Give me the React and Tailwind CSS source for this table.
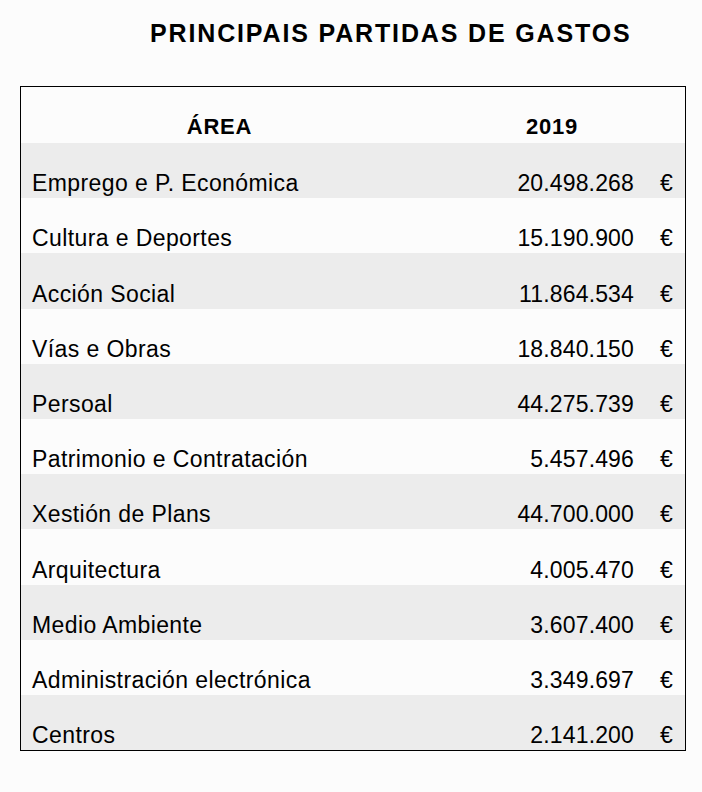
import React from "react";

const rows = [
  ["Emprego e P. Económica", "20.498.268"],
  ["Cultura e Deportes", "15.190.900"],
  ["Acción Social", "11.864.534"],
  ["Vías e Obras", "18.840.150"],
  ["Persoal", "44.275.739"],
  ["Patrimonio e Contratación", "5.457.496"],
  ["Xestión de Plans", "44.700.000"],
  ["Arquitectura", "4.005.470"],
  ["Medio Ambiente", "3.607.400"],
  ["Administración electrónica", "3.349.697"],
  ["Centros", "2.141.200"],
];

export default function App() {
  return (
    <div className="min-h-screen bg-[#fcfcfc] text-black font-['Liberation_Sans',Arial,sans-serif]">
      <h1 className="pl-[150px] pt-[21px] text-[25px] leading-none font-bold tracking-[1.85px]">
        PRINCIPAIS PARTIDAS DE GASTOS
      </h1>

      <div className="mt-[40px] ml-[20px] w-[666px] border border-black">
        <div className="grid grid-cols-[397px_52px_164px_1fr] h-[56px] items-end pb-[5px] text-[22px] leading-none font-bold tracking-[0.8px]">
          <div className="text-center">ÁREA</div>
          <div />
          <div className="text-center">2019</div>
          <div />
        </div>

        {rows.map(([area, amount], i) => (
          <div
            key={area}
            className={`grid grid-cols-[397px_52px_164px_1fr] h-[55.2px] items-end pb-[3px] text-[23px] leading-none tracking-[0.4px] ${
              i % 2 === 0 ? "bg-[#ececec]" : "bg-[#fcfcfc]"
            }`}
          >
            <div className="col-span-2 pl-[11px] whitespace-nowrap">{area}</div>
            <div className="text-right tracking-[0.15px]">{amount}</div>
            <div className="pl-[26px]">€</div>
          </div>
        ))}
      </div>
    </div>
  );
}
